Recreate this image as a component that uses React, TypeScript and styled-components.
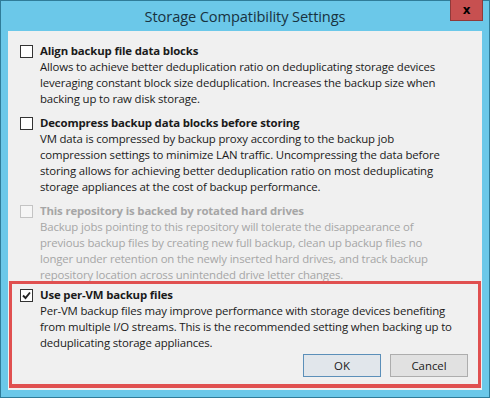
import styled, { createGlobalStyle } from 'styled-components';

const GlobalStyle = createGlobalStyle`
  html, body {
    margin: 0;
    padding: 0;
    background: #6bc8e9;
  }
  body {
    font-family: "Open Sans", "Noto Sans", sans-serif;
  }
`;

const Window = styled.div`
  width: 490px;
  height: 398px;
  box-sizing: border-box;
  background: #6bc8e9;
  border: 1px solid #2f7c99;
  display: flex;
  flex-direction: column;
`;

const TitleBar = styled.div`
  height: 30px;
  display: grid;
  grid-template-columns: 1fr auto 1fr;
  align-items: start;
`;

const Title = styled.div`
  grid-column: 2;
  padding-top: 5px;
  font-size: 14.6px;
  color: #18323f;
  letter-spacing: -0.1px;
`;

const CloseButton = styled.div`
  grid-column: 3;
  justify-self: end;
  margin-right: 6px;
  margin-top: -1px;
  width: 33px;
  height: 21px;
  box-sizing: border-box;
  background: #c75050;
  border: 1px solid #8f3a3a;
  border-top: none;
  display: flex;
  align-items: center;
  justify-content: center;
  color: #000;
  font-family: "DejaVu Sans", sans-serif;
  font-weight: bold;
  font-size: 12px;
`;

const Content = styled.div`
  margin: 0 7px;
  height: 359px;
  box-sizing: border-box;
  background: #f0f0f0;
  padding-top: 12px;
  padding-bottom: 2px;
  display: flex;
  flex-direction: column;
  gap: 8px;
`;

const Option = styled.div<{ $disabled?: boolean }>`
  display: grid;
  grid-template-columns: 13px 1fr;
  column-gap: 7px;
  padding-left: 12px;
  color: ${(p) => (p.$disabled ? '#a6a6a6' : '#1a1a1a')};
  font-size: 11.4px;
  line-height: 16px;
  letter-spacing: -0.15px;
`;

const Box = styled.div<{ $disabled?: boolean }>`
  width: 13px;
  height: 13px;
  box-sizing: border-box;
  margin-top: 2px;
  background: ${(p) => (p.$disabled ? '#f6f6f6' : '#fff')};
  border: 1px solid ${(p) => (p.$disabled ? '#c4c4c4' : '#333')};
  display: flex;
  align-items: center;
  justify-content: center;
`;

const Label = styled.div`
  font-weight: 700;
  white-space: nowrap;
`;

const Line = styled.div`
  white-space: nowrap;
`;

const Highlight = styled.div`
  margin: -10px 1px 0;
  flex: 1;
  border: 3px solid #e05050;
  border-bottom-width: 4px;
  padding: 3px 0 7px;
  display: flex;
  flex-direction: column;
  & > ${Option} {
    padding-left: 8px;
  }
`;

const Buttons = styled.div`
  display: flex;
  justify-content: flex-end;
  gap: 9px;
  padding-right: 10px;
  margin-top: auto;
`;

const Button = styled.div<{ $default?: boolean }>`
  width: 78px;
  height: 23px;
  box-sizing: border-box;
  display: flex;
  align-items: center;
  justify-content: center;
  font-size: 11.4px;
  color: #1a1a1a;
  background: ${(p) => (p.$default ? '#e1e6eb' : '#e1e1e1')};
  border: 1px solid ${(p) => (p.$default ? '#5b8fb9' : '#adadad')};
`;

type Item = {
  label: string;
  lines: string[];
  checked?: boolean;
  disabled?: boolean;
};

const items: Item[] = [
  {
    label: 'Align backup file data blocks',
    lines: [
      'Allows to achieve better deduplication ratio on deduplicating storage devices',
      'leveraging constant block size deduplication. Increases the backup size when',
      'backing up to raw disk storage.',
    ],
  },
  {
    label: 'Decompress backup data blocks before storing',
    lines: [
      'VM data is compressed by backup proxy according to the backup job',
      'compression settings to minimize LAN traffic. Uncompressing the data before',
      'storing allows for achieving better deduplication ratio on most deduplicating',
      'storage appliances at the cost of backup performance.',
    ],
  },
  {
    label: 'This repository is backed by rotated hard drives',
    disabled: true,
    lines: [
      'Backup jobs pointing to this repository will tolerate the disappearance of',
      'previous backup files by creating new full backup, clean up backup files no',
      'longer under retention on the newly inserted hard drives, and track backup',
      'repository location across unintended drive letter changes.',
    ],
  },
];

const perVm: Item = {
  label: 'Use per-VM backup files',
  checked: true,
  lines: [
    'Per-VM backup files may improve performance with storage devices benefiting',
    'from multiple I/O streams. This is the recommended setting when backing up to',
    'deduplicating storage appliances.',
  ],
};

const Check = () => (
  <svg width="9" height="9" viewBox="0 0 9 9">
    <path d="M1 4.5 L3.5 7 L8 1.5" fill="none" stroke="#222" strokeWidth="1.9" />
  </svg>
);

const OptionRow = ({ item }: { item: Item }) => (
  <Option $disabled={item.disabled}>
    <Box $disabled={item.disabled}>{item.checked && <Check />}</Box>
    <div>
      <Label>{item.label}</Label>
      {item.lines.map((l) => (
        <Line key={l}>{l}</Line>
      ))}
    </div>
  </Option>
);

const App = () => (
  <>
    <GlobalStyle />
    <Window>
      <TitleBar>
        <Title>Storage Compatibility Settings</Title>
        <CloseButton>x</CloseButton>
      </TitleBar>
      <Content>
        {items.map((it) => (
          <OptionRow key={it.label} item={it} />
        ))}
        <Highlight>
          <OptionRow item={perVm} />
          <Buttons>
            <Button $default>OK</Button>
            <Button>Cancel</Button>
          </Buttons>
        </Highlight>
      </Content>
    </Window>
  </>
);

export default App;
